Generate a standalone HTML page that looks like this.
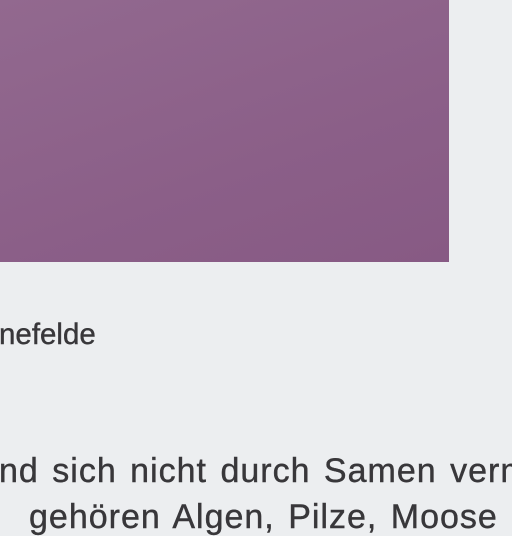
<!DOCTYPE html>
<html><head><style>
html,body{margin:0;padding:0;width:512px;height:512px;overflow:hidden;background:#eceef0;}
.p{position:absolute;left:0;top:0;width:449px;height:262px;background:linear-gradient(160deg,#92698f,#8b5f88 60%,#875a84);}
.t{position:absolute;font-family:"Liberation Sans",sans-serif;color:#38373a;white-space:nowrap;line-height:1;-webkit-text-stroke:0.4px #38373a;}
</style></head><body>
<div class="p"></div>
<div class="t" style="left:-1px;top:320px;font-size:29.5px;">nefelde</div>
<div class="t" style="left:-1px;top:454px;font-size:34px;letter-spacing:1px;word-spacing:3px;">nd sich nicht durch Samen verm</div>
<div class="t" style="left:29px;top:500px;font-size:34px;letter-spacing:1px;word-spacing:3px;">gehören Algen, Pilze, Moose und</div>
</body></html>
